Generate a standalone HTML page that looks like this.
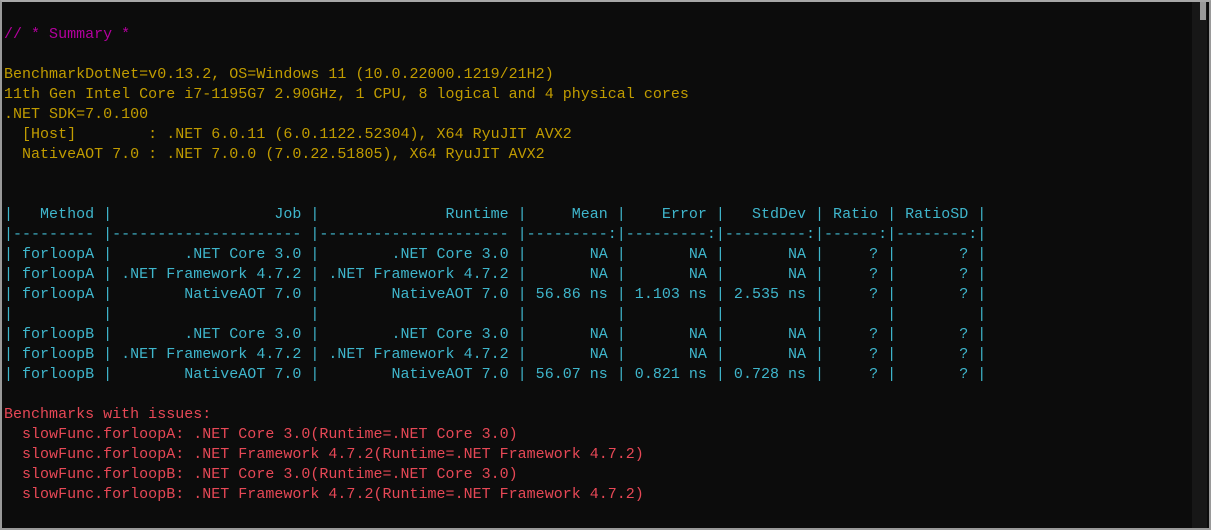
<!DOCTYPE html>
<html><head><meta charset="utf-8"><style>
html,body{margin:0;padding:0;background:#0c0c0c;width:1211px;height:530px;overflow:hidden}
.frame{position:absolute;left:0;top:0;width:1207px;height:526px;border:2px solid #9a9a9a;border-top:2px solid #a8a8a8;background:#0c0c0c}
.sb{position:absolute;left:1192px;top:2px;width:15px;height:526px;background:#171717}
.thumb{position:absolute;left:1200px;top:2px;width:6px;height:18px;background:#9a9a9a}
pre{position:absolute;left:4px;top:25px;margin:0;font-family:"Liberation Mono",monospace;font-size:15px;letter-spacing:0.01px;line-height:20px;color:#cccccc;white-space:pre}
.m{color:#b4009e}.y{color:#c19c00}.c{color:#3fb6cc}.r{color:#e74856}
</style></head><body>
<div class="frame"></div><div class="sb"></div><div class="thumb"></div>
<pre><span class="m">// * Summary *</span>

<span class="y">BenchmarkDotNet=v0.13.2, OS=Windows 11 (10.0.22000.1219/21H2)
11th Gen Intel Core i7-1195G7 2.90GHz, 1 CPU, 8 logical and 4 physical cores
.NET SDK=7.0.100
  [Host]        : .NET 6.0.11 (6.0.1122.52304), X64 RyuJIT AVX2
  NativeAOT 7.0 : .NET 7.0.0 (7.0.22.51805), X64 RyuJIT AVX2</span>


<span class="c">|   Method |                  Job |              Runtime |     Mean |    Error |   StdDev | Ratio | RatioSD |
|--------- |--------------------- |--------------------- |---------:|---------:|---------:|------:|--------:|
| forloopA |        .NET Core 3.0 |        .NET Core 3.0 |       NA |       NA |       NA |     ? |       ? |
| forloopA | .NET Framework 4.7.2 | .NET Framework 4.7.2 |       NA |       NA |       NA |     ? |       ? |
| forloopA |        NativeAOT 7.0 |        NativeAOT 7.0 | 56.86 ns | 1.103 ns | 2.535 ns |     ? |       ? |
|          |                      |                      |          |          |          |       |         |
| forloopB |        .NET Core 3.0 |        .NET Core 3.0 |       NA |       NA |       NA |     ? |       ? |
| forloopB | .NET Framework 4.7.2 | .NET Framework 4.7.2 |       NA |       NA |       NA |     ? |       ? |
| forloopB |        NativeAOT 7.0 |        NativeAOT 7.0 | 56.07 ns | 0.821 ns | 0.728 ns |     ? |       ? |</span>

<span class="r">Benchmarks with issues:
  slowFunc.forloopA: .NET Core 3.0(Runtime=.NET Core 3.0)
  slowFunc.forloopA: .NET Framework 4.7.2(Runtime=.NET Framework 4.7.2)
  slowFunc.forloopB: .NET Core 3.0(Runtime=.NET Core 3.0)
  slowFunc.forloopB: .NET Framework 4.7.2(Runtime=.NET Framework 4.7.2)</span></pre>
</body></html>
